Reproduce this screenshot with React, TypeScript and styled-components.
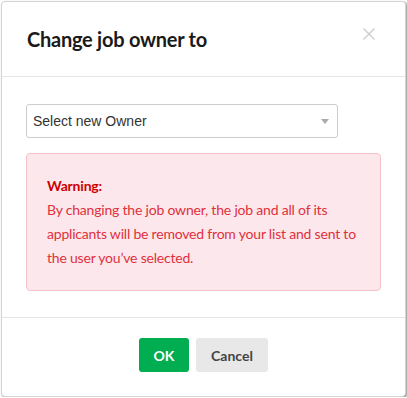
import React from "react";
import styled, { createGlobalStyle } from "styled-components";

const Global = createGlobalStyle`
  html, body { margin: 0; padding: 0; background: #ffffff; }
  body { font-family: "Lato", "Noto Sans", sans-serif; }
  * { box-sizing: border-box; }
`;

const Page = styled.div`
  padding: 1px 0 0 1px;
`;

const Modal = styled.div`
  width: 405px;
  height: 396px;
  background: #fff;
  border: 1px solid #d4d4d4;
  border-radius: 4px;
  box-shadow: 1px 1px 2px rgba(0, 0, 0, 0.45);
  display: flex;
  flex-direction: column;
  overflow: hidden;
`;

const Header = styled.div`
  display: flex;
  justify-content: space-between;
  align-items: flex-start;
  padding: 25px 26px 25px 25px;
  border-bottom: 1px solid #e5e5e5;
`;

const Title = styled.h4`
  margin: 0;
  font-family: "Lato", "Noto Sans", sans-serif;
  font-weight: 700;
  font-size: 20px;
  line-height: 24px;
  letter-spacing: -0.25px;
  color: #1a1a1a;
`;

const CloseButton = styled.button`
  border: 0;
  background: none;
  padding: 0;
  margin: 1px 4px 0 0;
  width: 12px;
  height: 12px;
  display: flex;
  cursor: pointer;
`;

const Body = styled.div`
  padding: 27px 24px 26px 24px;
  border-bottom: 1px solid #e5e5e5;
  display: flex;
  flex-direction: column;
  gap: 15px;
`;

const SelectBox = styled.div`
  width: 312px;
  height: 34px;
  border: 1px solid #cccccc;
  border-radius: 3px;
  display: flex;
  align-items: center;
  justify-content: space-between;
  padding: 0 8px 0 6px;
  font-family: "Liberation Sans", Arial, sans-serif;
  font-size: 14px;
  color: #333;
`;

const Caret = styled.span`
  width: 0;
  height: 0;
  border-left: 4.5px solid transparent;
  border-right: 4.5px solid transparent;
  border-top: 5px solid #aaaaaa;
  margin-top: 1px;
`;

const Alert = styled.div`
  border: 1px solid #f5c2c9;
  background: #fce8ec;
  border-radius: 4px;
  padding: 20px 20px 20px 20px;
  font-size: 14px;
  line-height: 24px;
  letter-spacing: -0.2px;
  white-space: nowrap;
  color: #e0303c;
`;

const AlertTitle = styled.div`
  font-weight: 700;
  color: #cc0000;
`;

const Footer = styled.div`
  display: flex;
  justify-content: center;
  gap: 7px;
  padding: 20px 0 25px 0;
`;

const Button = styled.button<{ $primary?: boolean }>`
  height: 34px;
  min-width: ${(p) => (p.$primary ? "50px" : "72px")};
  padding: 0 12px;
  border: 0;
  border-radius: 3px;
  font-family: "Lato", "Noto Sans", sans-serif;
  font-weight: 700;
  font-size: 14px;
  background: ${(p) => (p.$primary ? "#00ad50" : "#e8e8e8")};
  color: ${(p) => (p.$primary ? "#ffffff" : "#444444")};
  cursor: pointer;
`;

export default function App() {
  return (
    <Page>
      <Global />
      <Modal>
        <Header>
          <Title>Change job owner to</Title>
          <CloseButton aria-label="Close">
            <svg width="12" height="12" viewBox="0 0 12 12">
              <path d="M0.5 0.5 L11.5 11.5 M11.5 0.5 L0.5 11.5" stroke="#cccccc" strokeWidth="1.4" />
            </svg>
          </CloseButton>
        </Header>
        <Body>
          <SelectBox>
            <span>Select new Owner</span>
            <Caret />
          </SelectBox>
          <Alert>
            <AlertTitle>Warning:</AlertTitle>
            By changing the job owner, the job and all of its
            <br />
            applicants will be removed from your list and sent to
            <br />
            the user you’ve selected.
          </Alert>
        </Body>
        <Footer>
          <Button $primary>OK</Button>
          <Button>Cancel</Button>
        </Footer>
      </Modal>
    </Page>
  );
}
